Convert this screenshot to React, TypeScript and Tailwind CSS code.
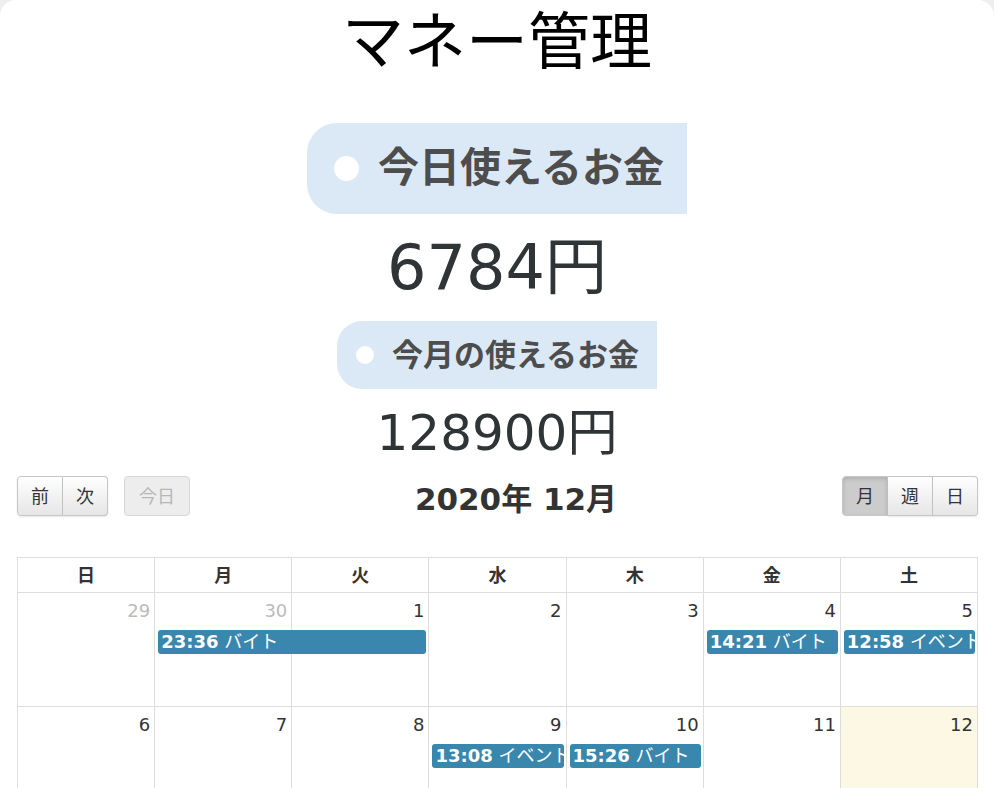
import React from 'react';

const font = "font-['DejaVu_Sans','Noto_Sans_CJK_JP',sans-serif]";

type Ev = { col: number; span: number; time: string; title: string };
type Day = { n: number; other?: boolean; today?: boolean };

const weeks: { days: Day[]; events: Ev[] }[] = [
    {
        days: [{ n: 29, other: true }, { n: 30, other: true }, { n: 1 }, { n: 2 }, { n: 3 }, { n: 4 }, { n: 5 }],
        events: [
            { col: 2, span: 2, time: '23:36', title: 'バイト' },
            { col: 6, span: 1, time: '14:21', title: 'バイト' },
            { col: 7, span: 1, time: '12:58', title: 'イベント' },
        ],
    },
    {
        days: [{ n: 6 }, { n: 7 }, { n: 8 }, { n: 9 }, { n: 10 }, { n: 11 }, { n: 12, today: true }],
        events: [
            { col: 4, span: 1, time: '13:08', title: 'イベント' },
            { col: 5, span: 1, time: '15:26', title: 'バイト' },
        ],
    },
];

const colStart = ['col-start-1', 'col-start-2', 'col-start-3', 'col-start-4', 'col-start-5', 'col-start-6', 'col-start-7'];
const colSpan = ['col-span-1', 'col-span-2', 'col-span-3'];

const btn =
    'h-[40px] px-[11px] text-[18px] text-[#333] border border-[#c6c6c6] bg-gradient-to-b from-white to-[#e6e6e6] shadow-[inset_0_1px_0_rgba(255,255,255,0.2),0_1px_2px_rgba(0,0,0,0.1)]';

function Badge({ big }: { big?: boolean }) {
    return big ? (
        <div className="flex justify-center">
            <div className="flex items-center h-[91px] bg-[#dbe9f6] rounded-l-[30px] pl-[27px] pr-[23px]">
                <span className="w-[25px] h-[25px] rounded-full bg-white"></span>
                <span className="ml-[19px] text-[41px] font-bold text-[#4d4d4d] leading-none">今日使えるお金</span>
            </div>
        </div>
    ) : (
        <div className="flex justify-center">
            <div className="flex items-center h-[68px] bg-[#dbe9f6] rounded-l-[25px] pl-[19px] pr-[18px]">
                <span className="w-[18px] h-[18px] rounded-full bg-white"></span>
                <span className="ml-[18px] text-[31px] font-bold text-[#4d4d4d] leading-none">今月の使えるお金</span>
            </div>
        </div>
    );
}

export default function App() {
    return (
        <div className={`min-h-screen bg-[#eeeeee] ${font}`}>
            <div className="bg-white rounded-t-[16px] min-h-screen">
                <div className="h-[86px] flex items-center justify-center text-[62px] leading-none text-black">
                    マネー管理
                </div>

                <div className="mt-[37px]">
                    <Badge big />
                </div>

                <div className="h-[107px] flex items-center justify-center text-[62px] leading-none text-[#2f3437]">
                    6784円
                </div>

                <Badge />

                <div className="h-[87px] flex items-center justify-center text-[50px] leading-none text-[#2f3437]">
                    128900円
                </div>

                {/* toolbar */}
                <div className="flex items-center ml-[17px] mr-[16px] h-[40px]">
                    <div className="flex">
                        <div className="flex">
                            <button className={`${btn} rounded-l-[4px] w-[46px]`}>前</button>
                            <button className={`${btn} rounded-r-[4px] w-[45px] border-l-0`}>次</button>
                        </div>
                        <button className={`${btn} ml-[16px] rounded-[4px] w-[66px] text-[#999] opacity-70 bg-none bg-[#e6e6e6] shadow-none`}>今日</button>
                    </div>
                    <h2 className="flex-1 text-center pt-[6px] text-[31px] font-bold text-[#333] leading-none">2020年 12月</h2>
                    <div className="flex">
                        <button className={`${btn} rounded-l-[4px] w-[46px] bg-none bg-[#cccccc] shadow-[inset_0_2px_4px_rgba(0,0,0,0.15)]`}>月</button>
                        <button className={`${btn} w-[45px] border-l-0`}>週</button>
                        <button className={`${btn} rounded-r-[4px] w-[45px] border-l-0`}>日</button>
                    </div>
                </div>

                {/* calendar */}
                <div className="mt-[41px] ml-[17px] mr-[16px] border-l border-t border-[#dddddd] text-[#333]">
                    <div className="grid grid-cols-7">
                        {['日', '月', '火', '水', '木', '金', '土'].map((d) => (
                            <div key={d} className="h-[35px] flex items-center justify-center border-r border-b border-[#dddddd] font-bold text-[18px]">
                                {d}
                            </div>
                        ))}
                    </div>
                    {weeks.map((w, wi) => (
                        <div key={wi} className="grid grid-cols-7 grid-rows-[36px_26px_1fr] h-[114px]">
                            {w.days.map((d, i) => (
                                <div
                                    key={'bg' + i}
                                    className={`${colStart[i]} row-start-1 row-span-3 border-r border-b border-[#dddddd] ${d.today ? 'bg-[#fcf8e3]' : ''}`}
                                ></div>
                            ))}
                            {w.days.map((d, i) => (
                                <div
                                    key={'n' + i}
                                    className={`${colStart[i]} row-start-1 text-right pr-[5px] pt-[6px] text-[18px] leading-[24px] ${d.other ? 'text-[#bbbbbb]' : 'text-[#333]'}`}
                                >
                                    {d.n}
                                </div>
                            ))}
                            {w.events.map((e, i) => (
                                <div
                                    key={'e' + i}
                                    className={`${colStart[e.col - 1]} ${colSpan[e.span - 1]} row-start-2 mx-[3px] mt-[1px] h-[24px] rounded-[3px] bg-[#3a87ad] text-white text-[18px] leading-[24px] px-[3px] whitespace-nowrap overflow-hidden`}
                                >
                                    <span className="font-bold">{e.time}</span> {e.title}
                                </div>
                            ))}
                        </div>
                    ))}
                </div>
            </div>
        </div>
    );
}
